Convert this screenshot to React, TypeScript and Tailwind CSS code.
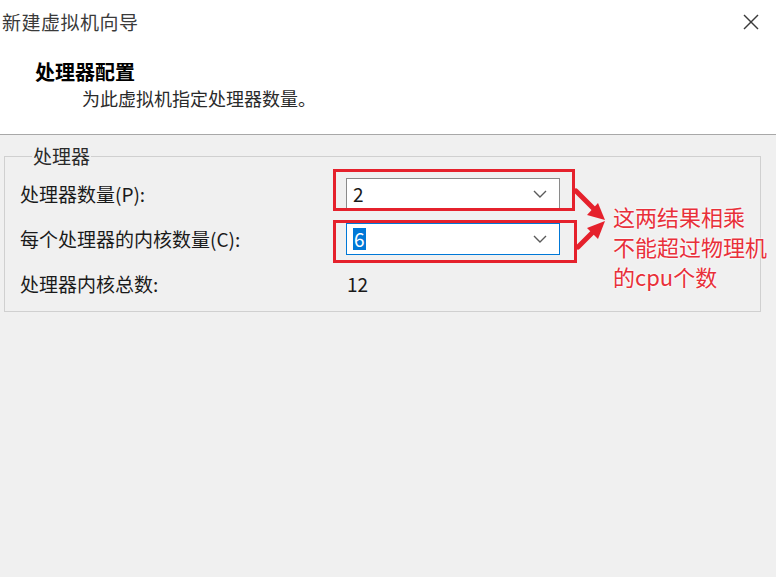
import React from "react";

const font = { fontFamily: '"Microsoft YaHei", "Noto Sans CJK SC", "Noto Sans", sans-serif' };

function Chevron() {
  return (
    <svg width="14" height="8" viewBox="0 0 14 8" className="shrink-0">
      <polyline points="1,1 7,7 13,1" fill="none" stroke="#5a5a5a" strokeWidth="1.4" />
    </svg>
  );
}

function Combo({ value, focused }: { value: string; focused?: boolean }) {
  return (
    <div
      className={
        "flex h-[32px] w-[214px] items-center justify-between bg-white pl-[6px] pr-[12px] " +
        (focused ? "border border-[#0078d7]" : "border border-[#8a8a8a]")
      }
    >
      {focused ? (
        <span className="bg-[#0078d7] px-[1px] text-[19px] leading-[22px] text-white">{value}</span>
      ) : (
        <span className="text-[19px] leading-[22px] text-[#1a1a1a]">{value}</span>
      )}
      <Chevron />
    </div>
  );
}

export default function App() {
  return (
    <div className="relative h-[577px] w-[776px] overflow-hidden bg-[#f0f0f0]" style={font}>
      {/* Header */}
      <div className="h-[135px] border-b border-[#a8a8a8] bg-white">
        <div className="flex items-start justify-between pt-[9px] pr-[17px]">
          <div className="pl-[2px] text-[19px] leading-[26px] tracking-[0.5px] text-[#3a3a3a]">新建虚拟机向导</div>
          <svg width="16" height="16" viewBox="0 0 16 16" className="mt-[5px]">
            <line x1="1" y1="1" x2="15" y2="15" stroke="#3a3a3a" strokeWidth="1.4" />
            <line x1="15" y1="1" x2="1" y2="15" stroke="#3a3a3a" strokeWidth="1.4" />
          </svg>
        </div>
        <div className="mt-[24px] pl-[35px] text-[20px] font-bold leading-[26px] text-black">处理器配置</div>
        <div className="pl-[82px] text-[18px] leading-[26px] text-[#2a2a2a]">为此虚拟机指定处理器数量。</div>
      </div>

      {/* Group box */}
      <fieldset className="ml-[4px] mr-[15px] mt-[8px] border border-[#d0d0d0] pb-[11px] pl-[15px] pt-0">
        <legend className="ml-[12px] px-[1px] text-[19px] leading-[26px] text-[#2a2a2a]">处理器</legend>
        <div className="mt-[9px] flex flex-col gap-[13px]">
          <div className="flex h-[32px] items-center">
            <div className="w-[326px] text-[19px] leading-[26px] text-[#1a1a1a]">处理器数量(P):</div>
            <Combo value="2" />
          </div>
          <div className="flex h-[32px] items-center">
            <div className="w-[326px] text-[19px] leading-[26px] text-[#1a1a1a]">每个处理器的内核数量(C):</div>
            <Combo value="6" focused />
          </div>
          <div className="flex h-[32px] items-center">
            <div className="w-[326px] text-[19px] leading-[26px] text-[#1a1a1a]">处理器内核总数:</div>
            <div className="pl-[1px] text-[19px] leading-[26px] text-[#1a1a1a]">12</div>
          </div>
        </div>
      </fieldset>

      {/* Annotation overlays */}
      <div className="absolute left-[333px] top-[169px] h-[42px] w-[242px] border-[3px] border-[#e5212c]" />
      <div className="absolute left-[333px] top-[220px] h-[43px] w-[244px] border-[3px] border-[#e5212c]" />
      <svg className="absolute left-[570px] top-[180px]" width="45" height="80" viewBox="0 0 45 80">
        <line x1="6" y1="11" x2="25" y2="30" stroke="#e5212c" strokeWidth="5" strokeLinecap="round" />
        <polygon points="35,40 17,35 28,23" fill="#e5212c" />
        <line x1="8" y1="67" x2="24" y2="51" stroke="#e5212c" strokeWidth="5" strokeLinecap="round" />
        <polygon points="35,41 17,48 28,59" fill="#e5212c" />
      </svg>
      <div
        className="absolute left-[613px] top-[201px] text-[22px] leading-[30px] text-[#e8303a] [text-shadow:0_0_2px_#fff,0_0_3px_#fff]"
        style={{ fontFamily: '"Microsoft YaHei", "Noto Sans CJK SC", sans-serif' }}
      >
        <div>这两结果相乘</div>
        <div>不能超过物理机</div>
        <div>的cpu个数</div>
      </div>
    </div>
  );
}
